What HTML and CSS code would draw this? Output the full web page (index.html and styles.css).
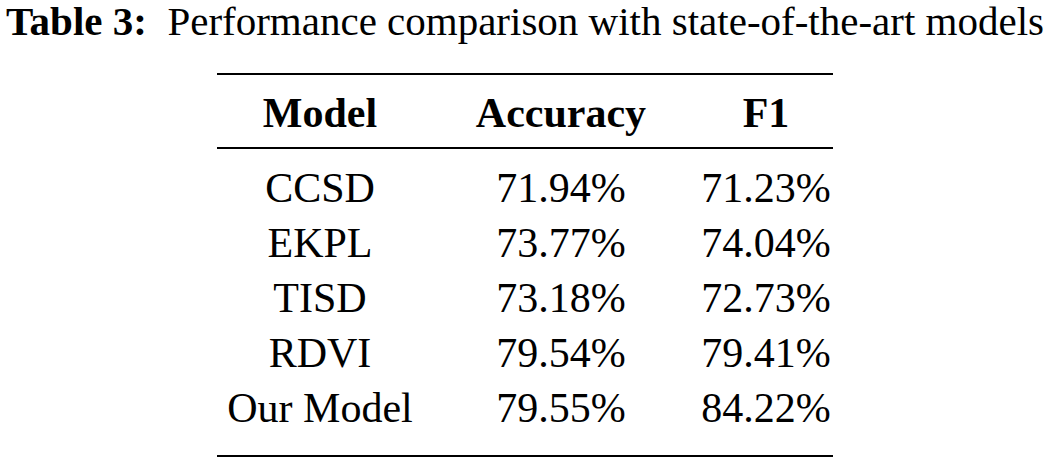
FILE: index.html
```html
<!DOCTYPE html>
<html lang="en">
<head>
<meta charset="utf-8">
<title>Table 3</title>
<link rel="stylesheet" href="styles.css">
</head>
<body>
<div class="page">
  <p class="caption"><span class="label">Table 3:</span>&nbsp; Performance comparison with state-of-the-art models</p>
  <table class="results">
    <colgroup>
      <col class="c1"><col class="c2"><col class="c3">
    </colgroup>
    <thead>
      <tr><th>Model</th><th>Accuracy</th><th>F1</th></tr>
    </thead>
    <tbody>
      <tr class="first"><td>CCSD</td><td>71.94%</td><td>71.23%</td></tr>
      <tr><td>EKPL</td><td>73.77%</td><td>74.04%</td></tr>
      <tr><td>TISD</td><td>73.18%</td><td>72.73%</td></tr>
      <tr><td>RDVI</td><td>79.54%</td><td>79.41%</td></tr>
      <tr class="last"><td>Our Model</td><td>79.55%</td><td>84.22%</td></tr>
    </tbody>
  </table>
</div>
</body>
</html>
```

FILE: styles.css
```css
html, body {
  margin: 0;
  padding: 0;
  background: #ffffff;
}

.page {
  width: 1051px;
  font-family: "Liberation Serif", "Times New Roman", serif;
  color: #000000;
  font-size: 42px;
}

.caption {
  margin: 0;
  padding: 0 0 0 6px;
  height: 42px;
  line-height: 42px;
  font-size: 41px;
  white-space: nowrap;
}

.caption .label {
  font-weight: bold;
}

.results {
  margin: 31px 0 0 217px;
  width: 616px;
  border-collapse: collapse;
  border-top: 2px solid #000;
  border-bottom: 2px solid #000;
  table-layout: fixed;
}

.c1 { width: 206px; }
.c2 { width: 276px; }
.c3 { width: 134px; }

.results th,
.results td {
  padding: 0;
  text-align: center;
  line-height: 55px;
  white-space: nowrap;
}

.results th {
  font-weight: bold;
  border-bottom: 2px solid #000;
  padding-top: 11px;
  padding-bottom: 6px;
}

.results tr.first td {
  padding-top: 12px;
}

.results tr.last td {
  padding-bottom: 19px;
}
```
